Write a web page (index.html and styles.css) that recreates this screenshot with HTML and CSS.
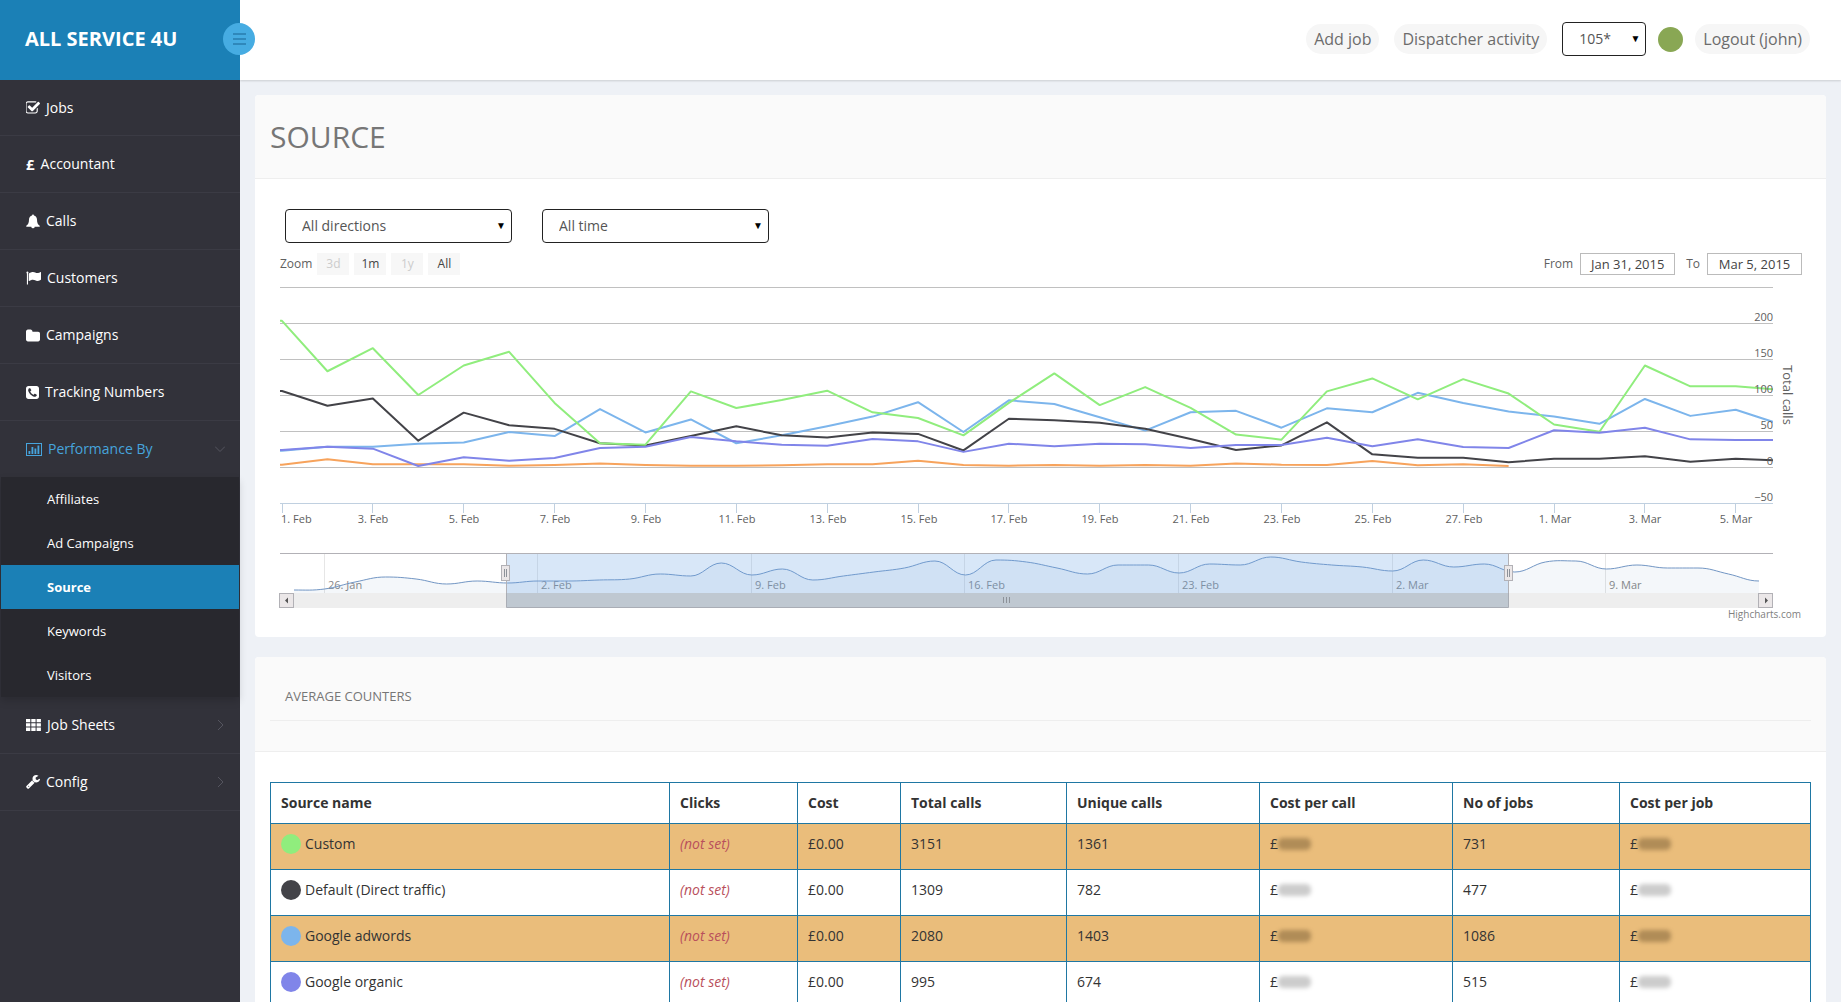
FILE: index.html
```html
<!DOCTYPE html>
<html lang="en">
<head>
  <meta charset="UTF-8">
  <meta name="viewport" content="width=device-width, initial-scale=1.0">
  <title>Source - All Service 4U</title>
  <link rel="stylesheet" href="styles.css">
</head>
<body>
  <div class="layout">
    <aside class="sidebar">
      <div class="brand">
        <a href="#">ALL SERVICE 4U</a>
        <button class="menu-toggle" aria-label="Toggle menu">
          <svg width="13" height="12" viewBox="0 0 13 12"><path d="M0 1h13M0 6h13M0 11h13" stroke="#2f88bb" stroke-width="2"/></svg>
        </button>
      </div>
      <nav>
        <ul class="menu">
          <li><a href="#">
            <svg width="14" height="14" viewBox="128 128 1600 1536"><path d="M1472 930v318q0 119-84.500 203.500t-203.500 84.500h-832q-119 0-203.500-84.500t-84.500-203.500v-832q0-119 84.500-203.500t203.500-84.500h832q63 0 117 25 15 7 18 23 3 17-9 29l-49 49q-10 10-23 10-3 0-9-2-23-6-45-6h-832q-66 0-113 47t-47 113v832q0 66 47 113t113 47h832q66 0 113-47t47-113v-254q0-13 9-22l64-64q10-10 23-10 6 0 12 3 20 8 20 29zm231-489l-814 814q-24 24-57 24t-57-24l-430-430q-24-24-24-57t24-57l110-110q24-24 57-24t57 24l263 263 647-647q24-24 57-24t57 24l110 110q24 24 24 57t-24 57z"/></svg>
            Jobs</a></li>
          <li><a href="#"><b class="pound">£</b> Accountant</a></li>
          <li><a href="#">
            <svg width="14" height="15" viewBox="0 0 15 15"><path d="M7.500 0a1 1 0 0 1 1 1.200c2 .5 3.300 2.200 3.300 4.300 0 3.200.9 5 2.900 6.500v1H9.300a1.800 1.800 0 0 1-3.600 0H.3v-1c2-1.500 2.900-3.300 2.900-6.500 0-2.100 1.300-3.800 3.300-4.300a1 1 0 0 1 1-1.200z"/></svg>
            Calls</a></li>
          <li><a href="#">
            <svg width="15" height="14" viewBox="0 0 15 14"><path d="M1.400.4a1.100 1.100 0 0 1 .6 2V13.500H.9V2.400A1.100 1.100 0 0 1 1.400.4zM2.900 2.400C4.300 1.600 5.700 1 7 1c2 0 2.600 1.100 4.300 1.100 1.200 0 2.300-.6 3.200-1.100.3-.1.500.1.500.4v6.900c0 .3-.2.500-.5.600-1 .6-2 1-3.200 1-1.700 0-2.600-1.100-4.400-1.100-1.300 0-2.600.6-3.600 1.200-.3.200-.6 0-.6-.3V3c0-.3 0-.4.200-.6z"/></svg>
            Customers</a></li>
          <li><a href="#">
            <svg width="14" height="13" viewBox="64 128 1664 1408"><path d="M1728 608v704q0 92-66 158t-158 66h-1216q-92 0-158-66t-66-158v-960q0-92 66-158t158-66h320q92 0 158 66t66 158v32h672q92 0 158 66t66 158z"/></svg>
            Campaigns</a></li>
          <li><a href="#">
            <svg width="13" height="13" viewBox="128 128 1536 1536"><path d="M1408 1193q0-11-2-16t-18-16.500-40.500-25-47.500-26.500-45.500-25-28.500-15q-5-3-19-13t-25-15-21-5q-15 0-36.500 20.500t-39.500 45-38.500 45-33.500 20.500q-7 0-16.500-3.500t-15.500-6.500-17-9.500-14-8.500q-99-55-170-126.500t-127-170.500q-2-3-8.500-14t-9.500-17-6.500-15.500-3.500-16.500q0-13 20.500-33.500t45-38.500 45-39.500 20.500-36.500q0-10-5-21t-15-25-13-19q-3-6-15-28.500t-25-45.500-26.500-47.500-25-40.500-16.500-18-16-2q-48 0-101 22-46 21-80 94.500t-34 130.500q0 16 2.500 34t5 30.500 9 33 10 29.500 12.500 33 11 30q60 164 216.500 320.500t320.500 216.500q6 2 30 11t33 12.500 29.500 10 33 9 30.500 5 34 2.500q57 0 130.500-34t94.500-80q22-53 22-101zm256-777v960q0 119-84.500 203.500t-203.500 84.500h-960q-119 0-203.500-84.500t-84.500-203.500v-960q0-119 84.500-203.500t203.500-84.500h960q119 0 203.500 84.500t84.500 203.500z"/></svg>
            Tracking Numbers</a></li>
          <li class="open"><a href="#">
            <svg width="16" height="13" viewBox="0 0 16 13"><path d="M0 0h16v13H0zM1 1v11h14V1z" fill-rule="evenodd"/><path d="M2.500 8h1.800v3H2.500zM5.500 4h1.800v7H5.500zM8.500 5.500h1.800V11H8.500zM11.500 2.500h1.800V11h-1.800z"/></svg>
            Performance By
            <svg class="arrow" width="10" height="10" viewBox="0 0 10 10"><path d="M0 2.500l5 5 5-5"/></svg></a>
            <ul class="submenu">
              <li><a href="#">Affiliates</a></li>
              <li><a href="#">Ad Campaigns</a></li>
              <li class="active"><a href="#">Source</a></li>
              <li><a href="#">Keywords</a></li>
              <li><a href="#">Visitors</a></li>
            </ul>
          </li>
          <li><a href="#">
            <svg width="15" height="12" viewBox="0 0 15 12"><path d="M0 0h4.300v3.300H0zM5.300 0h4.300v3.300H5.300zM10.600 0h4.300v3.300h-4.300zM0 4.300h4.300v3.300H0zM5.300 4.300h4.300v3.300H5.300zM10.600 4.300h4.300v3.300h-4.300zM0 8.600h4.300V12H0zM5.300 8.600h4.300V12H5.300zM10.600 8.600h4.300V12h-4.300z"/></svg>
            Job Sheets
            <svg class="arrow" width="10" height="10" viewBox="0 0 10 10"><path d="M3 0l5 5-5 5"/></svg></a></li>
          <li><a href="#">
            <svg width="14" height="14" viewBox="64 128 1664 1664"><path d="M448 1472q0-26-19-45t-45-19-45 19-19 45 19 45 45 19 45-19 19-45zm644-420l-682 682q-37 37-90 37-52 0-91-37l-106-108q-38-36-38-90 0-53 38-91l681-681q39 98 114.500 173.500t173.500 114.500zm634-435q0 39-23 106-47 134-164.500 217.500t-258.500 83.500q-185 0-316.500-131.500t-131.500-316.500 131.500-316.500 316.500-131.500q58 0 121.500 16.500t107.500 46.500q16 11 16 28t-16 28l-293 169v224l193 107q5-3 79-48.500t135.500-81 70.500-35.500q15 0 23.500 10t8.500 25z"/></svg>
            Config
            <svg class="arrow" width="10" height="10" viewBox="0 0 10 10"><path d="M3 0l5 5-5 5"/></svg></a></li>
        </ul>
      </nav>
    </aside>

    <div class="page">
      <header class="topbar">
        <a class="pill" href="#">Add job</a>
        <a class="pill" href="#">Dispatcher activity</a>
        <div class="select extension">
          <select aria-label="Extension"><option>105*</option></select>
        </div>
        <span class="status"></span>
        <a class="pill" href="#">Logout (john)</a>
      </header>

      <main>
        <section class="panel">
          <div class="panel-head">
            <h1>SOURCE</h1>
          </div>
          <div class="panel-body">
            <div class="filters">
              <div class="select">
                <select aria-label="Direction"><option>All directions</option></select>
              </div>
              <div class="select">
                <select aria-label="Period"><option>All time</option></select>
              </div>
            </div>
            <div class="range">
              <span>Zoom</span>
              <button disabled>3d</button>
              <button>1m</button>
              <button disabled>1y</button>
              <button>All</button>
              <label class="from" for="from">From</label>
              <input id="from" type="text" value="Jan 31, 2015">
              <label for="to">To</label>
              <input id="to" type="text" value="Mar 5, 2015">
            </div>
            <svg id="chart" class="chart" viewBox="0 0 1541 328">
              <defs>
                <clipPath id="plot"><rect x="10" y="0" width="1493" height="230"/></clipPath>
              </defs>
              <g id="grid"></g>
              <g id="lines" clip-path="url(#plot)"></g>
              <g id="labels"></g>
              <text class="axis-title" transform="translate(1513 116) rotate(90)" text-anchor="middle">Total calls</text>

              <!-- navigator -->
              <g id="weeks"></g>
              <path id="nav-area"/>
              <path id="nav-line"/>
              <rect class="nav-mask" x="236" y="274" width="1002" height="40"/>
              <path class="nav-border" d="M10 274.500H1503M236.500 274V314M1238.500 274V314"/>
              <rect class="track" x="10" y="314" width="1493" height="15"/>
              <path class="thumb" d="M236.500 314v14.500h1002V314"/>
              <path class="grip" d="M733.500 318v6M736.500 318v6M739.500 318v6"/>
              <rect class="key" x="9.500" y="314.500" width="14" height="14"/>
              <rect class="key" x="1488.500" y="314.500" width="14" height="14"/>
              <path class="key-arrow" d="M18 318.500v6l-3-3zM1495 318.500v6l3-3z"/>
              <rect class="key" x="231.500" y="286.500" width="8" height="15"/>
              <rect class="key" x="1234.500" y="286.500" width="8" height="15"/>
              <path class="grip" d="M234.500 290v8M236.500 290v8M1237.500 290v8M1239.500 290v8"/>
            </svg>
            <a class="credits" href="#">Highcharts.com</a>
          </div>
        </section>

        <section class="panel">
          <div class="panel-head">
            <h2>AVERAGE COUNTERS</h2>
          </div>
          <div class="panel-body">
            <table>
              <colgroup>
                <col class="c-name"><col class="c-clicks"><col class="c-cost"><col class="c-total"><col class="c-wide"><col class="c-wide"><col class="c-jobs"><col class="c-last">
              </colgroup>
              <thead>
                <tr><th>Source name</th><th>Clicks</th><th>Cost</th><th>Total calls</th><th>Unique calls</th><th>Cost per call</th><th>No of jobs</th><th>Cost per job</th></tr>
              </thead>
              <tbody>
                <tr><td><i class="dot green"></i>Custom</td><td><em>(not set)</em></td><td>£0.00</td><td>3151</td><td>1361</td><td>£<s class="hidden"></s></td><td>731</td><td>£<s class="hidden"></s></td></tr>
                <tr><td><i class="dot dark"></i>Default (Direct traffic)</td><td><em>(not set)</em></td><td>£0.00</td><td>1309</td><td>782</td><td>£<s class="hidden"></s></td><td>477</td><td>£<s class="hidden"></s></td></tr>
                <tr><td><i class="dot blue"></i>Google adwords</td><td><em>(not set)</em></td><td>£0.00</td><td>2080</td><td>1403</td><td>£<s class="hidden"></s></td><td>1086</td><td>£<s class="hidden"></s></td></tr>
                <tr><td><i class="dot purple"></i>Google organic</td><td><em>(not set)</em></td><td>£0.00</td><td>995</td><td>674</td><td>£<s class="hidden"></s></td><td>515</td><td>£<s class="hidden"></s></td></tr>
              </tbody>
            </table>
          </div>
        </section>
      </main>
    </div>
  </div>
  <script src="chart.js"></script>
</body>
</html>
```

FILE: styles.css
```css
* {
  box-sizing: border-box;
}
body {
  margin: 0;
  font-family: "Open Sans", sans-serif;
  font-size: 14px;
  line-height: 20px;
  color: #333;
  background: #eef1f6;
}
a {
  color: inherit;
  text-decoration: none;
}
ul {
  list-style: none;
  margin: 0;
  padding: 0;
}
.layout {
  display: flex;
  height: 100vh;
}

/* sidebar */
.sidebar {
  width: 240px;
  flex-shrink: 0;
  background: #32323a;
  color: #fff;
}
.brand {
  position: relative;
  height: 80px;
  padding: 0 25px 2px;
  display: flex;
  align-items: center;
  background: #1b80b6;
  font-size: 20px;
  font-weight: 700;
}
.menu-toggle {
  position: absolute;
  right: -15px;
  top: 23px;
  width: 32px;
  height: 32px;
  padding: 0;
  border: none;
  border-radius: 50%;
  background: #46ace2;
  display: flex;
  align-items: center;
  justify-content: center;
  cursor: pointer;
}
.menu > li > a {
  display: flex;
  align-items: center;
  gap: 6px;
  height: 57px;
  padding: 0 15px 0 26px;
  border-bottom: 1px solid #3b3b44;
}
.menu > li:first-child > a {
  height: 56px;
}
.menu svg {
  fill: currentColor;
}
.menu .arrow {
  margin-left: auto;
  fill: none;
  stroke: #55555f;
}
.pound {
  font-size: 15px;
}
.menu > .open > a {
  height: 56px;
  border-bottom: none;
  color: #46a4dd;
}
.submenu {
  margin: 0 1px;
  background: #28282e;
  font-size: 13px;
  box-shadow: 0 4px 8px rgba(0, 0, 0, 0.15);
}
.submenu a {
  display: block;
  padding: 12px 46px;
}
.submenu .active {
  background: #1b80b6;
  font-weight: 700;
}

/* top bar */
.page {
  flex: 1;
  min-width: 0;
  overflow: hidden;
}
.topbar {
  height: 80px;
  padding: 0 31px 2px 0;
  display: flex;
  align-items: center;
  justify-content: flex-end;
  gap: 12px;
  background: #fff;
  box-shadow: 0 1px 2px rgba(0, 0, 0, 0.15);
}
.pill {
  padding: 5px 8px;
  border-radius: 15px;
  background: #f6f6f6;
  font-size: 16px;
  color: #6c6c6c;
}
.pill + .pill,
.pill + .select {
  margin-left: 3px;
}
.status {
  width: 25px;
  height: 25px;
  border-radius: 50%;
  background: #89a754;
}
.select {
  position: relative;
  width: 227px;
}
.select select {
  appearance: none;
  display: block;
  width: 100%;
  height: 34px;
  padding: 0 16px;
  border: 1px solid #222;
  border-radius: 4px;
  background: #fff;
  font: inherit;
  color: #555;
}
.select::after {
  content: "▼";
  position: absolute;
  right: 6px;
  top: 6px;
  font-size: 10px;
  color: #000;
  pointer-events: none;
}
.extension {
  width: 84px;
}

/* panels */
main {
  padding: 15px;
}
.panel {
  margin-bottom: 20px;
  border-radius: 4px;
  background: #fff;
}
.panel-head {
  padding: 22px 15px 21px;
  border-bottom: 1px solid #eee;
  border-radius: 4px 4px 0 0;
  background: #fafafa;
}
.panel-body {
  padding: 30px 15px 18px;
}
h1 {
  margin: 0;
  font-size: 30px;
  line-height: 40px;
  font-weight: 400;
  color: #767676;
}
h2 {
  margin: 0 0 9px;
  padding: 7px 15px 14px;
  border-bottom: 1px solid #eee;
  font-size: 13px;
  font-weight: 400;
  color: #767676;
}
.filters {
  display: flex;
  gap: 30px;
  padding-left: 15px;
}

/* chart */
.range {
  display: flex;
  align-items: center;
  gap: 5px;
  padding: 10px 9px 4px 10px;
  font-size: 12px;
  color: #606060;
}
.range button {
  width: 32px;
  height: 22px;
  padding: 0;
  border: none;
  background: #f7f7f7;
  font: inherit;
  color: #444;
}
.range button:disabled {
  color: #ccc;
}
.range .from {
  margin-left: auto;
}
.range input {
  width: 95px;
  height: 22px;
  margin: 0 0 0 2px;
  padding: 0;
  border: 1px solid #bbb;
  font: inherit;
  font-size: 13px;
  color: #444;
  text-align: center;
}
.range input + label {
  margin-left: 6px;
}
.chart {
  display: block;
  width: 100%;
  overflow: visible;
  font-size: 11px;
  fill: #606060;
}
.axis-title {
  font-size: 13px;
}
#grid path {
  stroke: #c0c0c0;
}
#grid .axis {
  stroke: #c0d0e0;
}
#lines polyline {
  fill: none;
  stroke-width: 2;
  stroke-linejoin: round;
}
#weeks path {
  stroke: #e6e6e6;
}
#weeks text {
  fill: #888;
}
#nav-area {
  fill: rgba(69, 114, 167, 0.06);
}
#nav-line {
  fill: none;
  stroke: #7296c4;
}
.nav-mask {
  fill: rgba(110, 165, 230, 0.27);
}
.nav-border {
  stroke: #b2b1b6;
  fill: none;
}
.track {
  fill: #eee;
}
.thumb {
  fill: #bfc8d1;
  stroke: #a9adb5;
}
.grip {
  stroke: #8d9299;
}
.key {
  fill: #ebe7e8;
  stroke: #b2b1b6;
}
.key-arrow {
  fill: #555;
}
.credits {
  display: block;
  height: 10px;
  margin-top: 2px;
  padding-right: 10px;
  text-align: right;
  font-size: 10px;
  line-height: 10px;
  color: #808080;
}

/* table */
table {
  width: 100%;
  border-collapse: collapse;
  table-layout: fixed;
}
th,
td {
  padding: 10px;
  border: 1px solid #1f77a3;
  text-align: left;
  vertical-align: top;
}
td {
  height: 46px;
}
tbody tr:nth-child(odd) {
  background: #eabd7b;
}
em {
  color: #b9505c;
}
.c-name { width: 26%; }
.c-clicks { width: 128px; }
.c-cost { width: 103px; }
.c-total { width: 166px; }
.c-wide { width: 193px; }
.c-jobs { width: 167px; }
.c-last { width: 191px; }
.dot {
  float: left;
  width: 20px;
  height: 20px;
  margin-right: 4px;
  border-radius: 50%;
}
.green { background: #90ed7d; }
.dark { background: #434348; }
.blue { background: #7cb5ec; }
.purple { background: #8085e9; }
.hidden {
  display: inline-block;
  width: 33px;
  height: 12px;
  border-radius: 5px;
  background: rgba(0, 0, 0, 0.2);
  filter: blur(2px);
  vertical-align: -1px;
}
tbody tr:nth-child(odd) .hidden {
  background: rgba(70, 50, 20, 0.35);
}
```

FILE: chart.js
```js
// Daily totals, 1 Feb - 6 Mar
const series = [
  { color: '#7cb5ec', data: [22.7, 28, 28, 32.4, 34, 48.6, 43, 80.5, 48, 66, 33, 44, 56.5, 70, 90, 48.6, 92.6, 87.5, 69, 50.5, 76, 78, 54.6, 81.5, 76, 103, 89, 77, 70, 60, 94.5, 71, 79.6, 59] },
  { color: '#434348', data: [105.5, 85, 95, 36.5, 75.5, 58, 53, 33, 30, 43, 56.5, 44, 41, 48, 46, 23, 67, 65, 61.5, 53, 39, 23.6, 30, 62, 17.6, 13, 13, 6.5, 11.6, 11.6, 15, 7.4, 11.6, 8.8] },
  { color: '#90ed7d', data: [203, 133, 165, 100, 141, 160, 89, 33, 31, 105, 82, 93, 106, 76, 68, 44, 89, 130, 86, 111, 82, 45, 38, 105, 123, 94, 122, 102, 59, 49, 141, 112, 112, 107] },
  { color: '#f7a35c', data: [3.2, 10.6, 3.7, 3.7, 3.7, 1.8, 2.8, 5, 2.8, 1.8, 1.8, 2.3, 3.7, 3.7, 8.8, 2.8, 1.8, 2.8, 1.8, 2.8, 1.8, 5, 3.2, 2.8, 8.3, 2.3, 3.7, 1.4] },
  { color: '#8085e9', data: [23.6, 28, 25.5, 1.4, 13.4, 8.8, 12.5, 26.4, 28, 41.7, 35.6, 31, 29.6, 39, 35.6, 21, 32.4, 28.7, 32.4, 31.5, 26.4, 30.5, 30.5, 40.7, 28.7, 38.4, 27.8, 26.4, 51, 47.7, 54.6, 38.4, 37.5, 37.5] }
];
// Heights of the overview line, 25 Jan onwards
const overview = [2, 3, 10, 15, 13, 8, 11, 9, 11, 11, 12, 13, 18, 16, 29, 17, 23, 12, 16, 20, 24, 31, 17, 32, 30, 24, 18, 27, 27, 19, 28, 27, 35, 30, 27, 25, 21, 32, 25, 28, 20, 30, 31, 23, 27, 24, 24, 18, 11];

const left = 10;
const right = 1503;
const day = 45.43;
const dayX = i => 12 + i * day;
const valY = v => 188 - v * 0.72;

let grid = '';
let labels = '';
for (let v = -50; v <= 250; v += 50) {
  const y = Math.round(valY(v)) + 0.5;
  grid += `<path class="${v < 0 ? 'axis' : ''}" d="M${left} ${y}H${right}"/>`;
  if (v < 250) {
    labels += `<text x="${right}" y="${y - 3}" text-anchor="end">${v < 0 ? '−50' : v}</text>`;
  }
}
for (let i = 0; i < 34; i += 2) {
  const x = Math.floor(dayX(i));
  const name = i < 28 ? (i + 1) + '. Feb' : (i - 27) + '. Mar';
  grid += `<path class="axis" d="M${x}.5 224v10"/>`;
  labels += `<text x="${i ? x + 1 : x - 1}" y="244" text-anchor="${i ? 'middle' : 'start'}">${name}</text>`;
}
document.getElementById('grid').innerHTML = grid;
document.getElementById('labels').innerHTML = labels;

document.getElementById('lines').innerHTML = series.map(s => {
  // first segment starts at the plot edge
  const points = [`${left},${valY(s.data[0])}`].concat(s.data.map((v, i) => `${dayX(i)},${valY(v)}`));
  return `<polyline stroke="${s.color}" points="${points.join(' ')}"/>`;
}).join('');

const weeks = ['26. Jan', '2. Feb', '9. Feb', '16. Feb', '23. Feb', '2. Mar', '9. Mar'];
document.getElementById('weeks').innerHTML = weeks.map((name, i) => {
  const x = Math.floor(54 + i * 213.6);
  return `<path d="M${x}.5 275v39"/><text x="${x + 4}" y="310">${name}</text>`;
}).join('');

const step = 1465 / (overview.length - 1);
const pts = overview.map((h, i) => [24 + i * step, 313 - h]);
const slope = i => {
  if (i === 0 || i === pts.length - 1) return 0;
  const a = pts[i][1] - pts[i - 1][1];
  const b = pts[i + 1][1] - pts[i][1];
  return a * b <= 0 ? 0 : (a + b) / 2;
};
let line = `M${pts[0]}`;
for (let i = 1; i < pts.length; i++) {
  const [x0, y0] = pts[i - 1];
  const [x1, y1] = pts[i];
  const c = step * 0.4;
  line += `C${x0 + c} ${y0 + slope(i - 1) * 0.4} ${x1 - c} ${y1 - slope(i) * 0.4} ${x1} ${y1}`;
}
document.getElementById('nav-line').setAttribute('d', line);
document.getElementById('nav-area').setAttribute('d', line + 'V314H24Z');
```
